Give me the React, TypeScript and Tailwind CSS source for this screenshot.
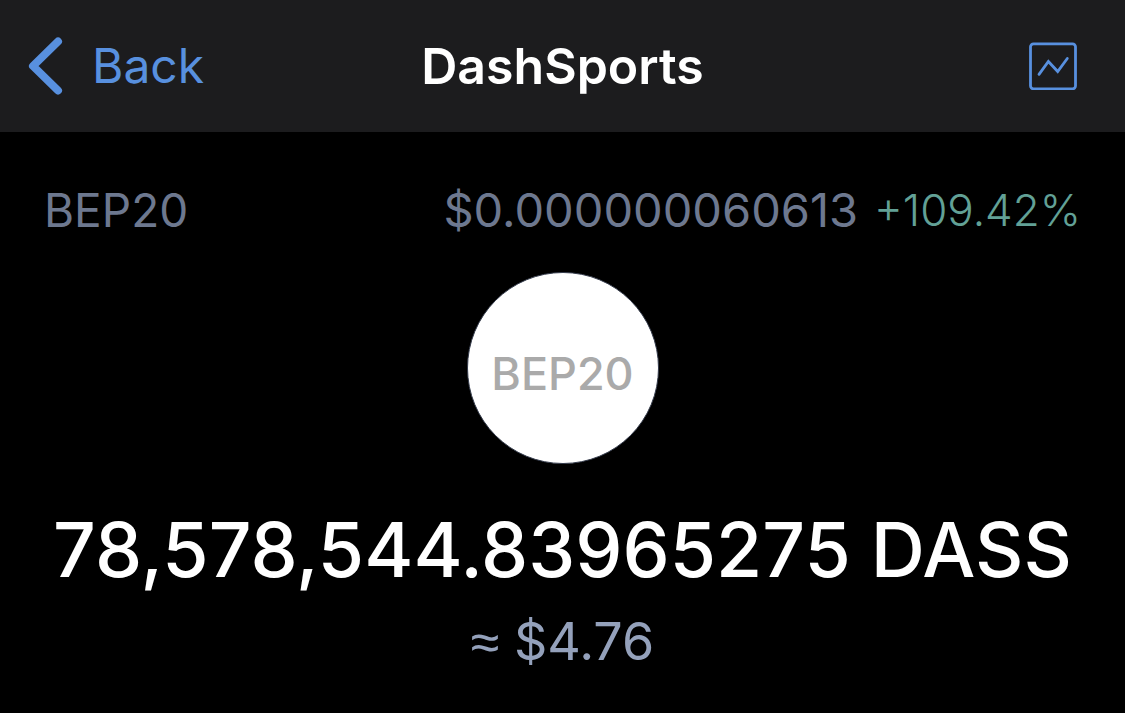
export default function App() {
  return (
    <div className="min-h-screen bg-black font-['Inter',sans-serif]">
      <header className="grid h-33 grid-cols-[1fr_auto_1fr] items-center bg-[#1c1c1e] px-7">
        <button type="button" className="flex items-center gap-7 justify-self-start text-5xl text-[#5890df]">
          <svg aria-hidden="true" width="36" height="60" viewBox="0 0 36 60" fill="none" stroke="currentColor" strokeWidth="8" strokeLinecap="round" strokeLinejoin="round">
            <path d="M30 5.5 5 30l25 24.5" />
          </svg>
          Back
        </button>
        <h1 className="text-[50px] leading-[60px] font-semibold text-white">DashSports</h1>
        <button type="button" aria-label="Price chart" className="mr-5 justify-self-end text-[#5890df]">
          <svg aria-hidden="true" width="48" height="48" viewBox="0 0 48 48" fill="none" stroke="currentColor" strokeWidth="2.8" strokeLinecap="round">
            <rect x="1.5" y="1.8" width="45" height="45" rx="3" />
            <path d="m10 32.3 9.4-12.8 9.3 10 9.6-13" />
          </svg>
        </button>
      </header>
      <main className="flex flex-col items-center px-11 pt-12">
        <div className="flex w-full items-center justify-between text-[46px] leading-[60px] text-[#6d788f]">
          <span>BEP20</span>
          <p className="flex gap-4">
            <span className="text-[47px]">$0.000000060613</span>
            <span className="text-[44px] font-light text-[#62a196]">+109.42%</span>
          </p>
        </div>
        <div className="mt-8 flex size-48 items-center justify-center rounded-full border border-[#343b4b] bg-white pt-3 text-[45px] font-medium text-[#aaaaaa]">BEP20</div>
        <p className="mt-10 text-[75px] leading-[92px] font-medium whitespace-nowrap text-white">78,578,544.83965275 DASS</p>
        <p className="mt-3 text-[52px] leading-[68px] text-[#94a1bb]">
          <span className="font-['Liberation_Sans',sans-serif]">≈</span> $4.76
        </p>
      </main>
    </div>
  );
}
